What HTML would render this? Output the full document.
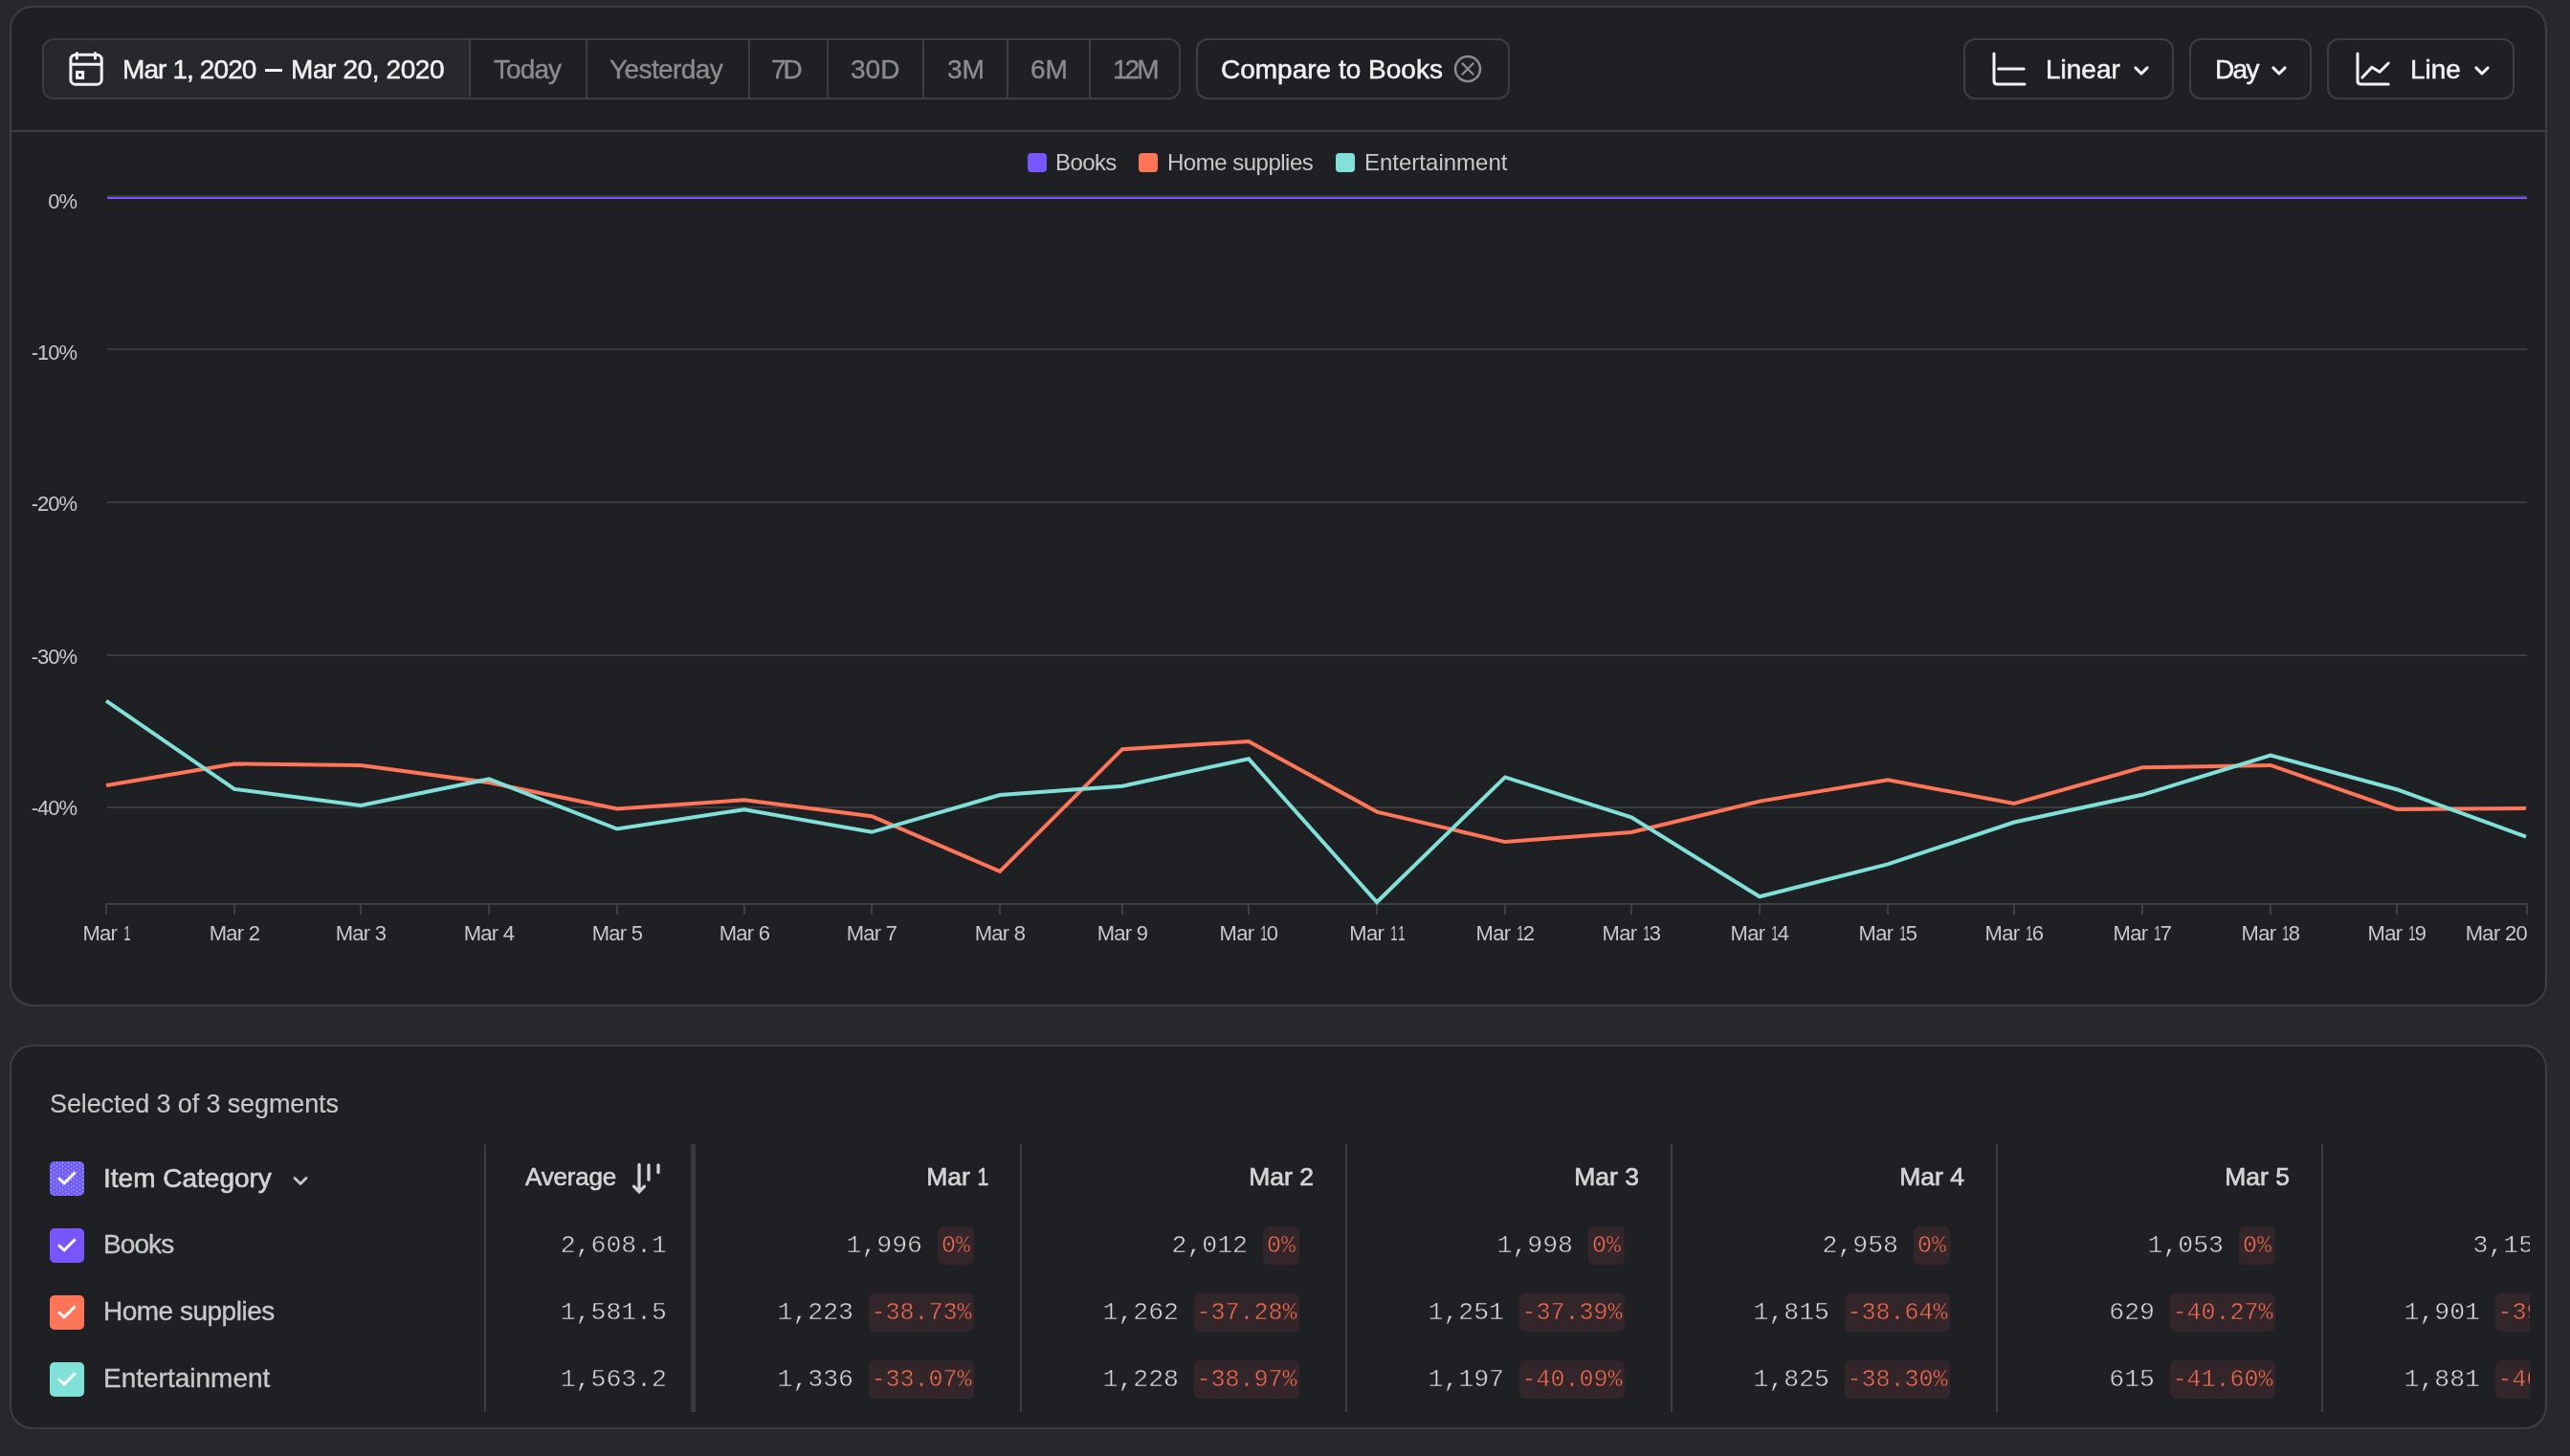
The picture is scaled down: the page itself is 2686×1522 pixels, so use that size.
<!DOCTYPE html>
<html><head><meta charset="utf-8">
<style>
html,body{margin:0;padding:0;}
body{width:2686px;height:1522px;background:#27282c;position:relative;overflow:hidden;font-family:"Liberation Sans", sans-serif;}
.abs{position:absolute;}
.panel{position:absolute;box-sizing:border-box;border:2px solid #3d3e41;border-radius:24px;background:#1f2024;}
.t{position:absolute;white-space:nowrap;line-height:1;will-change:transform;}
.btn{position:absolute;box-sizing:border-box;border:2px solid #3d3e41;border-radius:12px;height:64px;top:40px;}
.sep{position:absolute;top:40px;width:2px;height:64px;background:#3d3e41;}
.mono{font-family:"Liberation Mono", monospace;}
.badge{position:absolute;height:40px;border-radius:6px;background:#33262a;}
</style></head><body>

<div class="panel" style="left:10px;top:6px;width:2652px;height:1046px;"></div>
<div class="abs" style="left:12px;top:136px;width:2648px;height:2px;background:#3d3e41;"></div>
<div class="btn" style="left:44px;width:1190px;"></div>
<div class="abs" style="left:46px;top:42px;width:444px;height:60px;background:#27282c;border-radius:10px 0 0 10px;"></div>
<div class="sep" style="left:490px;"></div>
<div class="sep" style="left:612px;"></div>
<div class="sep" style="left:782px;"></div>
<div class="sep" style="left:864px;"></div>
<div class="sep" style="left:964px;"></div>
<div class="sep" style="left:1052px;"></div>
<div class="sep" style="left:1138px;"></div>
<svg class="abs" style="left:70px;top:52px;" width="40" height="40" viewBox="0 0 40 40">
<rect x="3.9" y="5.2" width="32.3" height="31" rx="5" fill="none" stroke="#f2f2f2" stroke-width="3"/>
<line x1="3.9" y1="15.2" x2="36.2" y2="15.2" stroke="#f2f2f2" stroke-width="3"/>
<line x1="10.3" y1="3.5" x2="10.3" y2="8.9" stroke="#f2f2f2" stroke-width="3" stroke-linecap="round"/>
<line x1="29.5" y1="3.5" x2="29.5" y2="8.9" stroke="#f2f2f2" stroke-width="3" stroke-linecap="round"/>
<rect x="10.6" y="23.4" width="6" height="6" fill="none" stroke="#f2f2f2" stroke-width="3"/>
</svg>
<div class="t" style="left:128px;top:59px;font-size:28px;color:#f2f2f2;-webkit-text-stroke:0.5px #f2f2f2;letter-spacing:-0.9px;">Mar 1, 2020</div>
<div class="abs" style="left:277px;top:72px;width:18px;height:2.5px;background:#f2f2f2;"></div>
<div class="t" style="left:303.5px;top:59px;font-size:28px;color:#f2f2f2;-webkit-text-stroke:0.5px #f2f2f2;letter-spacing:-0.4px;">Mar 20, 2020</div>
<div class="t" style="left:516px;top:59px;font-size:28px;color:#8c8c8e;-webkit-text-stroke:0.35px #8c8c8e;letter-spacing:-0.9px;">Today</div>
<div class="t" style="left:637px;top:59px;font-size:28px;color:#8c8c8e;-webkit-text-stroke:0.35px #8c8c8e;letter-spacing:-0.6px;">Yesterday</div>
<div class="t" style="left:806px;top:59px;font-size:28px;color:#8c8c8e;-webkit-text-stroke:0.35px #8c8c8e;letter-spacing:-3px;">7D</div>
<div class="t" style="left:889px;top:59px;font-size:28px;color:#8c8c8e;-webkit-text-stroke:0.35px #8c8c8e;">30D</div>
<div class="t" style="left:990px;top:59px;font-size:28px;color:#8c8c8e;-webkit-text-stroke:0.35px #8c8c8e;">3M</div>
<div class="t" style="left:1077px;top:59px;font-size:28px;color:#8c8c8e;-webkit-text-stroke:0.35px #8c8c8e;">6M</div>
<div class="t" style="left:1163px;top:59px;font-size:28px;color:#8c8c8e;-webkit-text-stroke:0.35px #8c8c8e;letter-spacing:-3px;">12M</div>
<div class="btn" style="left:1250px;width:328px;"></div>
<div class="t" style="left:1276px;top:59px;font-size:28px;color:#f2f2f2;-webkit-text-stroke:0.5px #f2f2f2;">Compare to Books</div>
<svg class="abs" style="left:1518px;top:56px;" width="32" height="32" viewBox="0 0 32 32">
<circle cx="16" cy="16" r="13" fill="none" stroke="#8c8c8e" stroke-width="2.5"/>
<line x1="9.8" y1="9.8" x2="22.2" y2="22.2" stroke="#8c8c8e" stroke-width="2.2"/>
<line x1="22.2" y1="9.8" x2="9.8" y2="22.2" stroke="#8c8c8e" stroke-width="2.2"/>
</svg>
<div class="btn" style="left:2052px;width:220px;"></div>
<div class="btn" style="left:2288px;width:128px;"></div>
<div class="btn" style="left:2432px;width:196px;"></div>
<svg class="abs" style="left:2080px;top:52px;" width="40" height="40" viewBox="0 0 40 40">
<path d="M4 3.9 V32.5 Q4 36 7.5 36 H36" fill="none" stroke="#f2f2f2" stroke-width="3" stroke-linecap="round" stroke-linejoin="round"/>
<line x1="8.7" y1="20" x2="35.2" y2="20" stroke="#f2f2f2" stroke-width="3" stroke-linecap="round"/>
</svg>
<div class="t" style="left:2138px;top:59px;font-size:28px;color:#f2f2f2;-webkit-text-stroke:0.5px #f2f2f2;">Linear</div>
<svg class="abs" style="left:2228px;top:66px;" width="20" height="16" viewBox="0 0 20 16">
<path d="M3.9 4.9 L10 11 L16.1 4.9" fill="none" stroke="#f2f2f2" stroke-width="3" stroke-linecap="round" stroke-linejoin="round"/>
</svg>
<div class="t" style="left:2315px;top:59px;font-size:28px;color:#f2f2f2;-webkit-text-stroke:0.5px #f2f2f2;letter-spacing:-1.6px;">Day</div>
<svg class="abs" style="left:2372px;top:66px;" width="20" height="16" viewBox="0 0 20 16">
<path d="M3.9 4.9 L10 11 L16.1 4.9" fill="none" stroke="#f2f2f2" stroke-width="3" stroke-linecap="round" stroke-linejoin="round"/>
</svg>
<svg class="abs" style="left:2460px;top:52px;" width="40" height="40" viewBox="0 0 40 40">
<path d="M4 3.9 V32.5 Q4 36 7.5 36 H36.2" fill="none" stroke="#f2f2f2" stroke-width="3" stroke-linecap="round" stroke-linejoin="round"/>
<path d="M8.9 29.1 L19 18.2 L27.1 23.3 L36.2 14" fill="none" stroke="#f2f2f2" stroke-width="3" stroke-linecap="round" stroke-linejoin="round"/>
</svg>
<div class="t" style="left:2519px;top:59px;font-size:28px;color:#f2f2f2;-webkit-text-stroke:0.5px #f2f2f2;">Line</div>
<svg class="abs" style="left:2584px;top:66px;" width="20" height="16" viewBox="0 0 20 16">
<path d="M3.9 4.9 L10 11 L16.1 4.9" fill="none" stroke="#f2f2f2" stroke-width="3" stroke-linecap="round" stroke-linejoin="round"/>
</svg>
<div class="abs" style="left:1074px;top:160px;width:20px;height:20px;border-radius:4px;background:#7856ff;"></div>
<div class="t" style="left:1103px;top:158px;font-size:24px;color:#c8c8c9;letter-spacing:-0.6px;">Books</div>
<div class="abs" style="left:1190px;top:160px;width:20px;height:20px;border-radius:4px;background:#ff7557;"></div>
<div class="t" style="left:1220px;top:158px;font-size:24px;color:#c8c8c9;letter-spacing:-0.5px;">Home supplies</div>
<div class="abs" style="left:1396px;top:160px;width:20px;height:20px;border-radius:4px;background:#80e1d9;"></div>
<div class="t" style="left:1426px;top:158px;font-size:24px;color:#c8c8c9;letter-spacing:0;">Entertainment</div>
<div class="t" style="left:0;width:80px;text-align:right;top:199.5px;font-size:22px;color:#c8c8c9;letter-spacing:-1px;">0%</div>
<div class="t" style="left:0;width:80px;text-align:right;top:357.5px;font-size:22px;color:#c8c8c9;letter-spacing:-1px;">-10%</div>
<div class="t" style="left:0;width:80px;text-align:right;top:515.5px;font-size:22px;color:#c8c8c9;letter-spacing:-1px;">-20%</div>
<div class="t" style="left:0;width:80px;text-align:right;top:675.5px;font-size:22px;color:#c8c8c9;letter-spacing:-1px;">-30%</div>
<div class="t" style="left:0;width:80px;text-align:right;top:833.5px;font-size:22px;color:#c8c8c9;letter-spacing:-1px;">-40%</div>
<svg class="abs" style="left:0;top:0;" width="2686" height="1522" viewBox="0 0 2686 1522">
<rect x="112" y="204" width="2529" height="2" fill="#3a3b3e"/>
<rect x="112" y="364" width="2529" height="2" fill="#3a3b3e"/>
<rect x="112" y="524" width="2529" height="2" fill="#3a3b3e"/>
<rect x="112" y="684" width="2529" height="2" fill="#3a3b3e"/>
<rect x="112" y="843" width="2529" height="2" fill="#3a3b3e"/>
<rect x="110" y="944" width="2532" height="2" fill="#3e3f42"/>
<rect x="110" y="944" width="2" height="12" fill="#3e3f42"/>
<rect x="244" y="944" width="2" height="12" fill="#3e3f42"/>
<rect x="376" y="944" width="2" height="12" fill="#3e3f42"/>
<rect x="510" y="944" width="2" height="12" fill="#3e3f42"/>
<rect x="644" y="944" width="2" height="12" fill="#3e3f42"/>
<rect x="777" y="944" width="2" height="12" fill="#3e3f42"/>
<rect x="910" y="944" width="2" height="12" fill="#3e3f42"/>
<rect x="1044" y="944" width="2" height="12" fill="#3e3f42"/>
<rect x="1172" y="944" width="2" height="12" fill="#3e3f42"/>
<rect x="1304" y="944" width="2" height="12" fill="#3e3f42"/>
<rect x="1438" y="944" width="2" height="12" fill="#3e3f42"/>
<rect x="1572" y="944" width="2" height="12" fill="#3e3f42"/>
<rect x="1704" y="944" width="2" height="12" fill="#3e3f42"/>
<rect x="1838" y="944" width="2" height="12" fill="#3e3f42"/>
<rect x="1972" y="944" width="2" height="12" fill="#3e3f42"/>
<rect x="2104" y="944" width="2" height="12" fill="#3e3f42"/>
<rect x="2238" y="944" width="2" height="12" fill="#3e3f42"/>
<rect x="2372" y="944" width="2" height="12" fill="#3e3f42"/>
<rect x="2504" y="944" width="2" height="12" fill="#3e3f42"/>
<rect x="2640" y="944" width="2" height="12" fill="#3e3f42"/>
<rect x="112" y="206" width="2529" height="2" fill="#7856ff"/>
<polyline points="111,821 245,798.5 377,800 511,818 645,845.5 778,836.2 911,853.2 1045,910.9 1173,783.2 1305,775 1439,848.6 1573,880.1 1705,870 1839,837.6 1973,815.2 2105,840 2239,802.3 2373,799.9 2505,846 2640,845" fill="none" stroke="#ff7557" stroke-width="4" stroke-linejoin="miter"/>
<polyline points="111,732.6 245,824.9 377,842 511,814.4 645,866.5 778,846.2 911,869.8 1045,831 1173,821.7 1305,793.2 1439,943 1573,812.4 1705,854.4 1839,937.3 1973,903.4 2105,859.5 2239,830.8 2373,789.6 2505,825.2 2640,874.6" fill="none" stroke="#80e1d9" stroke-width="4" stroke-linejoin="miter"/>
</svg>
<div class="t" style="left:11px;width:200px;text-align:center;top:965px;font-size:22px;letter-spacing:-0.7px;color:#c8c8c9;">Mar <span style="display:inline-block;transform:scaleX(0.6);margin:0 -2.5px 0 -1px">1</span></div>
<div class="t" style="left:145px;width:200px;text-align:center;top:965px;font-size:22px;letter-spacing:-0.7px;color:#c8c8c9;">Mar 2</div>
<div class="t" style="left:277px;width:200px;text-align:center;top:965px;font-size:22px;letter-spacing:-0.7px;color:#c8c8c9;">Mar 3</div>
<div class="t" style="left:411px;width:200px;text-align:center;top:965px;font-size:22px;letter-spacing:-0.7px;color:#c8c8c9;">Mar 4</div>
<div class="t" style="left:545px;width:200px;text-align:center;top:965px;font-size:22px;letter-spacing:-0.7px;color:#c8c8c9;">Mar 5</div>
<div class="t" style="left:678px;width:200px;text-align:center;top:965px;font-size:22px;letter-spacing:-0.7px;color:#c8c8c9;">Mar 6</div>
<div class="t" style="left:811px;width:200px;text-align:center;top:965px;font-size:22px;letter-spacing:-0.7px;color:#c8c8c9;">Mar 7</div>
<div class="t" style="left:945px;width:200px;text-align:center;top:965px;font-size:22px;letter-spacing:-0.7px;color:#c8c8c9;">Mar 8</div>
<div class="t" style="left:1073px;width:200px;text-align:center;top:965px;font-size:22px;letter-spacing:-0.7px;color:#c8c8c9;">Mar 9</div>
<div class="t" style="left:1205px;width:200px;text-align:center;top:965px;font-size:22px;letter-spacing:-0.7px;color:#c8c8c9;">Mar <span style="display:inline-block;transform:scaleX(0.6);margin:0 -2.5px 0 -1px">1</span>0</div>
<div class="t" style="left:1339px;width:200px;text-align:center;top:965px;font-size:22px;letter-spacing:-0.7px;color:#c8c8c9;">Mar <span style="display:inline-block;transform:scaleX(0.6);margin:0 -2.5px 0 -1px">1</span><span style="display:inline-block;transform:scaleX(0.6);margin:0 -2.5px 0 -1px">1</span></div>
<div class="t" style="left:1473px;width:200px;text-align:center;top:965px;font-size:22px;letter-spacing:-0.7px;color:#c8c8c9;">Mar <span style="display:inline-block;transform:scaleX(0.6);margin:0 -2.5px 0 -1px">1</span>2</div>
<div class="t" style="left:1605px;width:200px;text-align:center;top:965px;font-size:22px;letter-spacing:-0.7px;color:#c8c8c9;">Mar <span style="display:inline-block;transform:scaleX(0.6);margin:0 -2.5px 0 -1px">1</span>3</div>
<div class="t" style="left:1739px;width:200px;text-align:center;top:965px;font-size:22px;letter-spacing:-0.7px;color:#c8c8c9;">Mar <span style="display:inline-block;transform:scaleX(0.6);margin:0 -2.5px 0 -1px">1</span>4</div>
<div class="t" style="left:1873px;width:200px;text-align:center;top:965px;font-size:22px;letter-spacing:-0.7px;color:#c8c8c9;">Mar <span style="display:inline-block;transform:scaleX(0.6);margin:0 -2.5px 0 -1px">1</span>5</div>
<div class="t" style="left:2005px;width:200px;text-align:center;top:965px;font-size:22px;letter-spacing:-0.7px;color:#c8c8c9;">Mar <span style="display:inline-block;transform:scaleX(0.6);margin:0 -2.5px 0 -1px">1</span>6</div>
<div class="t" style="left:2139px;width:200px;text-align:center;top:965px;font-size:22px;letter-spacing:-0.7px;color:#c8c8c9;">Mar <span style="display:inline-block;transform:scaleX(0.6);margin:0 -2.5px 0 -1px">1</span>7</div>
<div class="t" style="left:2273px;width:200px;text-align:center;top:965px;font-size:22px;letter-spacing:-0.7px;color:#c8c8c9;">Mar <span style="display:inline-block;transform:scaleX(0.6);margin:0 -2.5px 0 -1px">1</span>8</div>
<div class="t" style="left:2405px;width:200px;text-align:center;top:965px;font-size:22px;letter-spacing:-0.7px;color:#c8c8c9;">Mar <span style="display:inline-block;transform:scaleX(0.6);margin:0 -2.5px 0 -1px">1</span>9</div>
<div class="t" style="left:2441px;width:200px;text-align:right;top:965px;font-size:22px;letter-spacing:-0.7px;color:#c8c8c9;">Mar 20</div>
<div class="panel" style="left:10px;top:1092px;width:2652px;height:402px;"></div>
<div class="t" style="left:52px;top:1141px;font-size:27px;color:#c8c8c9;-webkit-text-stroke:0.15px #c8c8c9;letter-spacing:-0.12px;">Selected 3 of 3 segments</div>
<div class="abs" style="left:52px;top:1214px;width:36px;height:36px;border-radius:5px;background-color:#7856ff;background-image:radial-gradient(circle at 1.5px 1.5px, rgba(128,225,217,0.85) 0.75px, transparent 1.05px),radial-gradient(circle at 1.5px 1.5px, rgba(128,225,217,0.85) 0.75px, transparent 1.05px);background-size:6px 4px,6px 4px;background-position:0 0,3px 2px;"></div>
<svg class="abs" style="left:52px;top:1214px;" width="36" height="36" viewBox="0 0 36 36">
<path d="M9 17.4 L15.1 22.9 L26.7 11.4" fill="none" stroke="#f7f7f7" stroke-width="2.9" stroke-linecap="butt" stroke-linejoin="miter"/></svg>
<div class="t" style="left:108px;top:1218px;font-size:28px;color:#d4d4d5;-webkit-text-stroke:0.6px #d4d4d5;letter-spacing:0px;">Item Category</div>
<svg class="abs" style="left:304px;top:1226px;" width="20" height="16" viewBox="0 0 20 16">
<path d="M4 5.5 L10 11.5 L16 5.5" fill="none" stroke="#c8c8c9" stroke-width="2.8" stroke-linecap="round" stroke-linejoin="round"/>
</svg>
<div class="abs" style="left:52px;top:1284px;width:36px;height:36px;border-radius:5px;background-color:#7856ff;"></div>
<svg class="abs" style="left:52px;top:1284px;" width="36" height="36" viewBox="0 0 36 36">
<path d="M9 17.4 L15.1 22.9 L26.7 11.4" fill="none" stroke="#f7f7f7" stroke-width="2.9" stroke-linecap="butt" stroke-linejoin="miter"/></svg>
<div class="t" style="left:108px;top:1287px;font-size:28px;color:#c8c8c9;-webkit-text-stroke:0.35px #c8c8c9;letter-spacing:-0.9px;">Books</div>
<div class="abs" style="left:52px;top:1354px;width:36px;height:36px;border-radius:5px;background-color:#ff7557;"></div>
<svg class="abs" style="left:52px;top:1354px;" width="36" height="36" viewBox="0 0 36 36">
<path d="M9 17.4 L15.1 22.9 L26.7 11.4" fill="none" stroke="#f7f7f7" stroke-width="2.9" stroke-linecap="butt" stroke-linejoin="miter"/></svg>
<div class="t" style="left:108px;top:1357px;font-size:28px;color:#c8c8c9;-webkit-text-stroke:0.35px #c8c8c9;letter-spacing:-0.5px;">Home supplies</div>
<div class="abs" style="left:52px;top:1424px;width:36px;height:36px;border-radius:5px;background-color:#80e1d9;"></div>
<svg class="abs" style="left:52px;top:1424px;" width="36" height="36" viewBox="0 0 36 36">
<path d="M9 17.4 L15.1 22.9 L26.7 11.4" fill="none" stroke="#f7f7f7" stroke-width="2.9" stroke-linecap="butt" stroke-linejoin="miter"/></svg>
<div class="t" style="left:108px;top:1427px;font-size:28px;color:#c8c8c9;-webkit-text-stroke:0.35px #c8c8c9;letter-spacing:0px;">Entertainment</div>
<div class="abs" style="left:506px;top:1196px;width:2px;height:280px;background:#3d3e41;"></div>
<div class="abs" style="left:722px;top:1196px;width:5px;height:280px;background:#3a3b3e;"></div>
<div class="abs" style="left:1066px;top:1196px;width:2px;height:280px;background:#3d3e41;"></div>
<div class="abs" style="left:1406px;top:1196px;width:2px;height:280px;background:#3d3e41;"></div>
<div class="abs" style="left:1746px;top:1196px;width:2px;height:280px;background:#3d3e41;"></div>
<div class="abs" style="left:2086px;top:1196px;width:2px;height:280px;background:#3d3e41;"></div>
<div class="abs" style="left:2426px;top:1196px;width:2px;height:280px;background:#3d3e41;"></div>
<div class="t" style="left:549px;top:1217px;font-size:26px;color:#d4d4d5;-webkit-text-stroke:0.6px #d4d4d5;letter-spacing:-0.2px;">Average</div>
<svg class="abs" style="left:658px;top:1213px;" width="36" height="40" viewBox="0 0 36 40">
<path d="M10 4.5 V32.5 M4.5 27.2 L10 32.8 L15.5 27.2" fill="none" stroke="#d4d4d5" stroke-width="3.3" stroke-linecap="round" stroke-linejoin="miter"/>
<line x1="20" y1="4.8" x2="20" y2="20.2" stroke="#d4d4d5" stroke-width="3.3" stroke-linecap="round"/>
<line x1="30" y1="4.8" x2="30" y2="12.5" stroke="#d4d4d5" stroke-width="3.3" stroke-linecap="round"/>
</svg>
<div class="t mono" style="left:497px;width:200px;text-align:right;top:1289px;font-size:26.5px;color:#d6d6d7;-webkit-text-stroke:0.5px #1f2024;">2,608.1</div>
<div class="t mono" style="left:497px;width:200px;text-align:right;top:1359px;font-size:26.5px;color:#d6d6d7;-webkit-text-stroke:0.5px #1f2024;">1,581.5</div>
<div class="t mono" style="left:497px;width:200px;text-align:right;top:1429px;font-size:26.5px;color:#d6d6d7;-webkit-text-stroke:0.5px #1f2024;">1,563.2</div>
<div class="abs" style="left:0;top:1190px;width:2644px;height:300px;overflow:hidden;">
<div class="t" style="left:733px;width:300px;text-align:right;top:27px;font-size:26.5px;color:#d4d4d5;-webkit-text-stroke:0.7px #d4d4d5;">Mar <span style="display:inline-block;transform:scaleX(0.8);margin:0 -1.5px 0 -1.5px">1</span></div>
<div class="badge" style="left:980px;top:92px;width:38px;"></div>
<div class="t mono" style="left:980px;width:38px;text-align:center;top:100px;font-size:25px;color:#f26b4f;-webkit-text-stroke:0.5px #33262a;">0%</div>
<div class="t mono" style="left:764px;width:200px;text-align:right;top:99px;font-size:26.5px;color:#d6d6d7;-webkit-text-stroke:0.5px #1f2024;">1,996</div>
<div class="badge" style="left:908px;top:162px;width:110px;"></div>
<div class="t mono" style="left:908px;width:110px;text-align:center;top:170px;font-size:25px;color:#f26b4f;-webkit-text-stroke:0.5px #33262a;">-38.73%</div>
<div class="t mono" style="left:692px;width:200px;text-align:right;top:169px;font-size:26.5px;color:#d6d6d7;-webkit-text-stroke:0.5px #1f2024;">1,223</div>
<div class="badge" style="left:908px;top:232px;width:110px;"></div>
<div class="t mono" style="left:908px;width:110px;text-align:center;top:240px;font-size:25px;color:#f26b4f;-webkit-text-stroke:0.5px #33262a;">-33.07%</div>
<div class="t mono" style="left:692px;width:200px;text-align:right;top:239px;font-size:26.5px;color:#d6d6d7;-webkit-text-stroke:0.5px #1f2024;">1,336</div>
<div class="t" style="left:1073px;width:300px;text-align:right;top:27px;font-size:26.5px;color:#d4d4d5;-webkit-text-stroke:0.7px #d4d4d5;">Mar 2</div>
<div class="badge" style="left:1320px;top:92px;width:38px;"></div>
<div class="t mono" style="left:1320px;width:38px;text-align:center;top:100px;font-size:25px;color:#f26b4f;-webkit-text-stroke:0.5px #33262a;">0%</div>
<div class="t mono" style="left:1104px;width:200px;text-align:right;top:99px;font-size:26.5px;color:#d6d6d7;-webkit-text-stroke:0.5px #1f2024;">2,012</div>
<div class="badge" style="left:1248px;top:162px;width:110px;"></div>
<div class="t mono" style="left:1248px;width:110px;text-align:center;top:170px;font-size:25px;color:#f26b4f;-webkit-text-stroke:0.5px #33262a;">-37.28%</div>
<div class="t mono" style="left:1032px;width:200px;text-align:right;top:169px;font-size:26.5px;color:#d6d6d7;-webkit-text-stroke:0.5px #1f2024;">1,262</div>
<div class="badge" style="left:1248px;top:232px;width:110px;"></div>
<div class="t mono" style="left:1248px;width:110px;text-align:center;top:240px;font-size:25px;color:#f26b4f;-webkit-text-stroke:0.5px #33262a;">-38.97%</div>
<div class="t mono" style="left:1032px;width:200px;text-align:right;top:239px;font-size:26.5px;color:#d6d6d7;-webkit-text-stroke:0.5px #1f2024;">1,228</div>
<div class="t" style="left:1413px;width:300px;text-align:right;top:27px;font-size:26.5px;color:#d4d4d5;-webkit-text-stroke:0.7px #d4d4d5;">Mar 3</div>
<div class="badge" style="left:1660px;top:92px;width:38px;"></div>
<div class="t mono" style="left:1660px;width:38px;text-align:center;top:100px;font-size:25px;color:#f26b4f;-webkit-text-stroke:0.5px #33262a;">0%</div>
<div class="t mono" style="left:1444px;width:200px;text-align:right;top:99px;font-size:26.5px;color:#d6d6d7;-webkit-text-stroke:0.5px #1f2024;">1,998</div>
<div class="badge" style="left:1588px;top:162px;width:110px;"></div>
<div class="t mono" style="left:1588px;width:110px;text-align:center;top:170px;font-size:25px;color:#f26b4f;-webkit-text-stroke:0.5px #33262a;">-37.39%</div>
<div class="t mono" style="left:1372px;width:200px;text-align:right;top:169px;font-size:26.5px;color:#d6d6d7;-webkit-text-stroke:0.5px #1f2024;">1,251</div>
<div class="badge" style="left:1588px;top:232px;width:110px;"></div>
<div class="t mono" style="left:1588px;width:110px;text-align:center;top:240px;font-size:25px;color:#f26b4f;-webkit-text-stroke:0.5px #33262a;">-40.09%</div>
<div class="t mono" style="left:1372px;width:200px;text-align:right;top:239px;font-size:26.5px;color:#d6d6d7;-webkit-text-stroke:0.5px #1f2024;">1,197</div>
<div class="t" style="left:1753px;width:300px;text-align:right;top:27px;font-size:26.5px;color:#d4d4d5;-webkit-text-stroke:0.7px #d4d4d5;">Mar 4</div>
<div class="badge" style="left:2000px;top:92px;width:38px;"></div>
<div class="t mono" style="left:2000px;width:38px;text-align:center;top:100px;font-size:25px;color:#f26b4f;-webkit-text-stroke:0.5px #33262a;">0%</div>
<div class="t mono" style="left:1784px;width:200px;text-align:right;top:99px;font-size:26.5px;color:#d6d6d7;-webkit-text-stroke:0.5px #1f2024;">2,958</div>
<div class="badge" style="left:1928px;top:162px;width:110px;"></div>
<div class="t mono" style="left:1928px;width:110px;text-align:center;top:170px;font-size:25px;color:#f26b4f;-webkit-text-stroke:0.5px #33262a;">-38.64%</div>
<div class="t mono" style="left:1712px;width:200px;text-align:right;top:169px;font-size:26.5px;color:#d6d6d7;-webkit-text-stroke:0.5px #1f2024;">1,815</div>
<div class="badge" style="left:1928px;top:232px;width:110px;"></div>
<div class="t mono" style="left:1928px;width:110px;text-align:center;top:240px;font-size:25px;color:#f26b4f;-webkit-text-stroke:0.5px #33262a;">-38.30%</div>
<div class="t mono" style="left:1712px;width:200px;text-align:right;top:239px;font-size:26.5px;color:#d6d6d7;-webkit-text-stroke:0.5px #1f2024;">1,825</div>
<div class="t" style="left:2093px;width:300px;text-align:right;top:27px;font-size:26.5px;color:#d4d4d5;-webkit-text-stroke:0.7px #d4d4d5;">Mar 5</div>
<div class="badge" style="left:2340px;top:92px;width:38px;"></div>
<div class="t mono" style="left:2340px;width:38px;text-align:center;top:100px;font-size:25px;color:#f26b4f;-webkit-text-stroke:0.5px #33262a;">0%</div>
<div class="t mono" style="left:2124px;width:200px;text-align:right;top:99px;font-size:26.5px;color:#d6d6d7;-webkit-text-stroke:0.5px #1f2024;">1,053</div>
<div class="badge" style="left:2268px;top:162px;width:110px;"></div>
<div class="t mono" style="left:2268px;width:110px;text-align:center;top:170px;font-size:25px;color:#f26b4f;-webkit-text-stroke:0.5px #33262a;">-40.27%</div>
<div class="t mono" style="left:2052px;width:200px;text-align:right;top:169px;font-size:26.5px;color:#d6d6d7;-webkit-text-stroke:0.5px #1f2024;">629</div>
<div class="badge" style="left:2268px;top:232px;width:110px;"></div>
<div class="t mono" style="left:2268px;width:110px;text-align:center;top:240px;font-size:25px;color:#f26b4f;-webkit-text-stroke:0.5px #33262a;">-41.60%</div>
<div class="t mono" style="left:2052px;width:200px;text-align:right;top:239px;font-size:26.5px;color:#d6d6d7;-webkit-text-stroke:0.5px #1f2024;">615</div>
<div class="t" style="left:2433px;width:300px;text-align:right;top:27px;font-size:26.5px;color:#d4d4d5;-webkit-text-stroke:0.7px #d4d4d5;">Mar 6</div>
<div class="badge" style="left:2680px;top:92px;width:38px;"></div>
<div class="t mono" style="left:2680px;width:38px;text-align:center;top:100px;font-size:25px;color:#f26b4f;-webkit-text-stroke:0.5px #33262a;">0%</div>
<div class="t mono" style="left:2464px;width:200px;text-align:right;top:99px;font-size:26.5px;color:#d6d6d7;-webkit-text-stroke:0.5px #1f2024;">3,150</div>
<div class="badge" style="left:2608px;top:162px;width:110px;"></div>
<div class="t mono" style="left:2608px;width:110px;text-align:center;top:170px;font-size:25px;color:#f26b4f;-webkit-text-stroke:0.5px #33262a;">-39.65%</div>
<div class="t mono" style="left:2392px;width:200px;text-align:right;top:169px;font-size:26.5px;color:#d6d6d7;-webkit-text-stroke:0.5px #1f2024;">1,901</div>
<div class="badge" style="left:2608px;top:232px;width:110px;"></div>
<div class="t mono" style="left:2608px;width:110px;text-align:center;top:240px;font-size:25px;color:#f26b4f;-webkit-text-stroke:0.5px #33262a;">-40.29%</div>
<div class="t mono" style="left:2392px;width:200px;text-align:right;top:239px;font-size:26.5px;color:#d6d6d7;-webkit-text-stroke:0.5px #1f2024;">1,881</div>
</div>
</body></html>
